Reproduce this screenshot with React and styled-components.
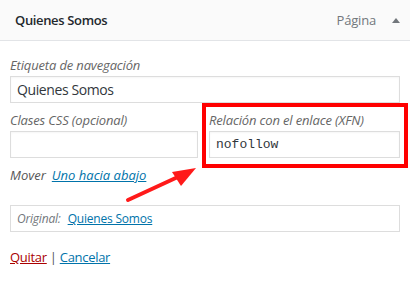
import styled, { createGlobalStyle } from "styled-components";

const uiFont = '"Open Sans", "Noto Sans", sans-serif';

const GlobalStyle = createGlobalStyle`
  html, body {
    margin: 0;
    padding: 0;
    background: #fff;
  }
  body {
    font-family: ${uiFont};
    color: #23282d;
  }
`;

const Panel = styled.div`
  position: relative;
  width: 410px;
  height: 281px;
  background: #fff;
  overflow: hidden;
`;

const Header = styled.div`
  height: 40px;
  display: flex;
  align-items: center;
  padding: 0 10px 0 15px;
  background: #fafafa;
  border-bottom: 1px solid #e2e4e7;
`;

const Title = styled.span`
  flex: 1;
  font-size: 13px;
  font-weight: 600;
  letter-spacing: -0.35px;
  color: #23282d;
`;

const ItemType = styled.span`
  font-size: 13px;
  color: #72777c;
  margin-right: 16px;
  letter-spacing: -0.2px;
`;

const Toggle = styled.span`
  width: 0;
  height: 0;
  border-left: 4px solid transparent;
  border-right: 4px solid transparent;
  border-bottom: 5px solid #72777c;
`;

const Body = styled.div`
  padding: 15px 10px 0;
`;

const Row = styled.div`
  display: grid;
  grid-template-columns: ${(p) => (p.$split ? "188px 191px" : "1fr")};
  column-gap: 11px;
  margin-bottom: 8px;
`;

const Field = styled.label`
  position: relative;
  display: block;
`;

const Highlight = styled(Field)`
  &::after {
    content: "";
    position: absolute;
    left: -7px;
    right: -8px;
    top: -8px;
    bottom: -10px;
    border: 4px solid #ff0000;
    pointer-events: none;
  }
`;

const Label = styled.span`
  display: block;
  font-size: 13px;
  font-style: italic;
  line-height: 18px;
  letter-spacing: -0.15px;
  color: #666;
  margin-bottom: 2px;
`;

const Input = styled.input`
  box-sizing: border-box;
  display: block;
  width: 100%;
  height: 27px;
  margin: 0;
  padding: 0 6px;
  border: 1px solid #ddd;
  background: #fff;
  box-shadow: inset 0 1px 2px rgba(0, 0, 0, 0.04);
  font-family: ${(p) =>
    p.$mono ? '"Liberation Mono", "DejaVu Sans Mono", monospace' : uiFont};
  font-size: ${(p) => (p.$mono ? "13px" : "14px")};
  letter-spacing: ${(p) => (p.$mono ? "0" : "-0.4px")};
  color: #32373c;
  outline: none;
`;

const MoveLine = styled.div`
  font-size: 13px;
  line-height: 18px;
  margin-bottom: 21px;
`;

const Muted = styled.span`
  font-style: italic;
  color: #555;
  margin-right: 6px;
`;

const Link = styled.a`
  color: ${(p) => (p.$danger ? "#a00" : "#0073aa")};
  text-decoration: underline;
  font-style: ${(p) => (p.$italic ? "italic" : "normal")};
`;

const OriginalBox = styled.div`
  box-sizing: border-box;
  height: 27px;
  display: flex;
  align-items: center;
  padding: 0 6px;
  border: 1px solid #ddd;
  font-size: 12px;
  letter-spacing: -0.2px;
  margin-bottom: 16px;
`;

const OriginalLabel = styled.span`
  font-style: italic;
  color: #72777c;
  margin-right: 7px;
`;

const Actions = styled.div`
  font-size: 13px;
  line-height: 18px;
  letter-spacing: -0.3px;
  color: #555;
  white-space: pre;
`;

const Arrow = styled.svg`
  position: absolute;
  left: 0;
  top: 0;
  pointer-events: none;
`;

export default function App() {
  return (
    <>
      <GlobalStyle />
      <Panel>
        <Header>
          <Title>Quienes Somos</Title>
          <ItemType>Página</ItemType>
          <Toggle />
        </Header>
        <Body>
          <Row>
            <Field>
              <Label>Etiqueta de navegación</Label>
              <Input defaultValue="Quienes Somos" />
            </Field>
          </Row>
          <Row $split>
            <Field>
              <Label>Clases CSS (opcional)</Label>
              <Input defaultValue="" />
            </Field>
            <Highlight>
              <Label>Relación con el enlace (XFN)</Label>
              <Input $mono defaultValue="nofollow" />
            </Highlight>
          </Row>
          <MoveLine>
            <Muted>Mover</Muted>
            <Link href="#" $italic>
              Uno hacia abajo
            </Link>
          </MoveLine>
          <OriginalBox>
            <OriginalLabel>Original:</OriginalLabel>
            <Link href="#">Quienes Somos</Link>
          </OriginalBox>
          <Actions>
            <Link href="#" $danger>
              Quitar
            </Link>
            {" | "}
            <Link href="#">Cancelar</Link>
          </Actions>
        </Body>
        <Arrow width="410" height="281" viewBox="0 0 410 281">
          <line x1="128" y1="200" x2="180" y2="176" stroke="#ff1a1a" strokeWidth="4" strokeLinecap="round" />
          <polygon points="196,168 172,172 181,186" fill="#ff1a1a" />
        </Arrow>
      </Panel>
    </>
  );
}
